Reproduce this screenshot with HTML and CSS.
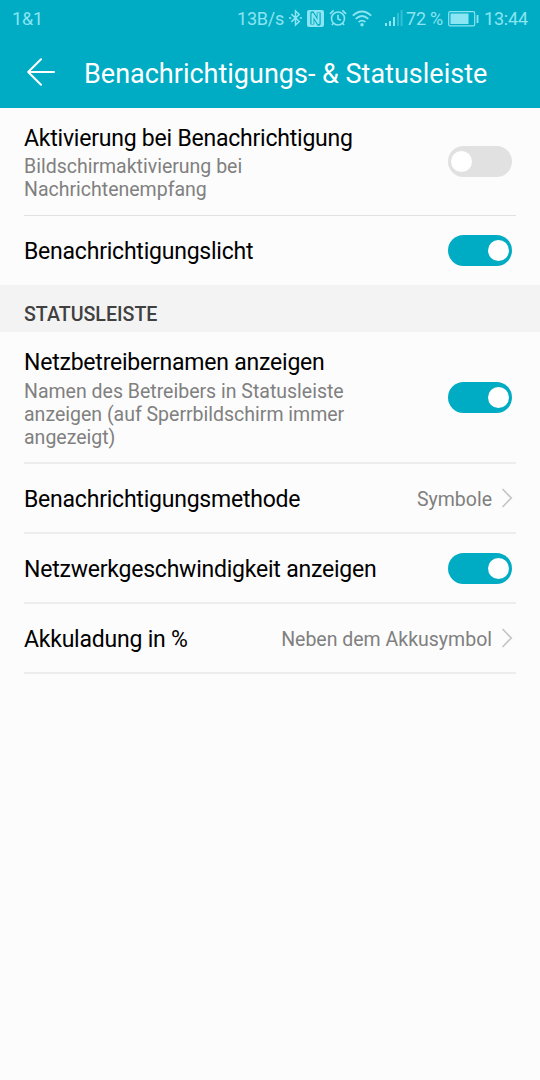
FILE: index.html
```html
<!DOCTYPE html>
<html lang="de">
<head>
<meta charset="utf-8">
<title>Benachrichtigungs- &amp; Statusleiste</title>
<link rel="stylesheet" href="styles.css">
</head>
<body>
<header class="header">
  <div class="status">
    <span class="carrier">1&amp;1</span>
    <div class="indicators">
      <span class="speed">13B/s</span>
      <svg class="ic-bt" width="13" height="18" viewBox="0 0 14 18" fill="none" stroke="currentColor" stroke-width="1.6"><path d="M2.500 4.800 11 12.800 7 16.500V1.500L11 5.200 2.500 13.200"/><path d="M0 9h2.400M11.600 9H14"/></svg>
      <svg class="ic-nfc" width="17" height="17" viewBox="0 0 17 17"><rect width="17" height="17" rx="2" fill="currentColor"/><path class="nfc-gap" d="M5.300 14.500V3.200L11.700 13.800V2.500"/><path class="nfc-line" d="M5.500 14V3.800L11.500 13.200V3"/></svg>
      <svg class="ic-alarm" width="18" height="18" viewBox="0 0 18 18" fill="none" stroke="currentColor" stroke-width="1.600"><circle cx="9" cy="9.500" r="6.500"/><path d="M9 5.800V10l2.800 1.300M.9 4.800 4.600 1.300M17.100 4.800 13.400 1.300M4.400 14.200 2.900 16M13.600 14.200l1.500 1.800"/></svg>
      <svg class="ic-wifi" width="20" height="17" viewBox="0 0 20 17" fill="none" stroke="currentColor" stroke-width="1.800"><path d="M.8 5.600Q10-2.600 19.200 5.600M3.700 8.900Q10 3.200 16.300 8.900M6.600 12Q10 9.200 13.400 12"/><circle cx="10" cy="14.800" r="1.700" fill="currentColor" stroke="none"/></svg>
      <svg class="ic-signal" width="18" height="17" viewBox="0 0 18 17" fill="currentColor"><path d="M0 13h2v3H0zM4 11h2v5H4zM8 7h2v9H8z"/><path opacity=".35" d="M12 3h2v13h-2zM15.600 0h2v16h-2z"/></svg>
      <span class="percent">72 %</span>
      <svg class="ic-battery" width="31" height="16" viewBox="0 0 31 16"><rect x=".7" y=".7" width="26" height="14.200" rx="1.500" fill="none" stroke="currentColor" stroke-width="1.200"/><path fill="currentColor" d="M2.500 2.500h18v10.500h-18zM28.600 4h1.800v8h-1.800z"/></svg>
      <span class="clock">13:44</span>
    </div>
  </div>
  <div class="titlebar">
    <svg width="28" height="28" viewBox="0 0 28 28" fill="none" stroke="currentColor" stroke-width="2" stroke-linecap="round" stroke-linejoin="round"><path d="M27 14H1.200M14 1.200 1.200 14 14 26.800"/></svg>
    <h1 class="title">Benachrichtigungs- &amp; Statusleiste</h1>
  </div>
</header>
<main>
  <section class="group">
    <div class="row row-double thin">
      <div><div class="label">Aktivierung bei Benachrichtigung</div><div class="summary">Bildschirmaktivierung bei<br>Nachrichtenempfang</div></div>
      <span class="switch off"></span>
    </div>
    <div class="row row-light">
      <div class="label">Benachrichtigungslicht</div>
      <span class="switch"></span>
    </div>
  </section>
  <h2 class="section-title">STATUSLEISTE</h2>
  <section class="group">
    <div class="row row-triple">
      <div><div class="label">Netzbetreibernamen anzeigen</div><div class="summary">Namen des Betreibers in Statusleiste<br>anzeigen (auf Sperrbildschirm immer<br>angezeigt)</div></div>
      <span class="switch"></span>
    </div>
    <div class="row">
      <div class="label">Benachrichtigungsmethode</div>
      <div class="value"><span>Symbole</span><svg width="12" height="20" viewBox="0 0 12 20"><path d="M1.500 1 10.300 10 1.500 19"/></svg></div>
    </div>
    <div class="row">
      <div class="label">Netzwerkgeschwindigkeit anzeigen</div>
      <span class="switch"></span>
    </div>
    <div class="row">
      <div class="label">Akkuladung in %</div>
      <div class="value"><span>Neben dem Akkusymbol</span><svg width="12" height="20" viewBox="0 0 12 20"><path d="M1.500 1 10.300 10 1.500 19"/></svg></div>
    </div>
  </section>
</main>
</body>
</html>
```
FILE: styles.css
```css
* { box-sizing: border-box; }
body { margin: 0; min-height: 1080px; background: #fcfcfc; color: #000; font-family: Roboto, sans-serif; }
.header { height: 108px; background: #00acc4; color: #fff; }
.status { display: flex; justify-content: space-between; height: 37px; padding: 1px 12px 0; color: #8be5f2; font-size: 18px; letter-spacing: -0.2px; line-height: 36px; white-space: nowrap; }
.indicators { display: flex; align-items: center; height: 36px; }
.indicators svg { flex: none; margin-bottom: 2px; }
.carrier { font-size: 18px; }
.speed { width: 47px; margin-left: -1px; }
.ic-bt { margin-left: 5px; }
.ic-nfc { margin-left: 5px; }
.nfc-gap { fill: none; stroke: #00acc4; stroke-width: 4; stroke-linejoin: round; }
.nfc-line { fill: none; stroke: currentColor; stroke-width: 2; stroke-linejoin: round; }
.ic-alarm { margin-left: 5px; }
.ic-wifi { margin-left: 5px; }
.ic-signal { margin-left: 13px; }
.percent { width: 38px; margin-left: 3px; }
.indicators .ic-battery { margin-left: 4px; margin-bottom: 1px; }
.clock { width: 44px; margin-left: 5px; }
.titlebar { display: flex; align-items: center; gap: 29px; height: 70px; padding-left: 27px; }
.title { margin: 3px 0 0; font-size: 27px; font-weight: 400; line-height: 32px; white-space: nowrap; }
.group { padding: 0 24px; }
.row { display: flex; align-items: center; justify-content: space-between; height: 70px; border-bottom: 2px solid #ededed; }
.row-double { height: 108px; }
.thin { border-bottom: 1px solid #e2e2e2; }
.row-light { height: 69px; border-bottom: 0; }
.row-triple { height: 132px; }
.label { padding-top: 3px; font-size: 23px; letter-spacing: -0.22px; line-height: 28px; white-space: nowrap; }
.row-triple .summary { margin-top: 3px; }
.summary { margin-top: 2px; color: #808080; font-size: 19.5px; line-height: 23px; white-space: nowrap; }
.switch { flex: none; display: flex; justify-content: flex-end; width: 64px; height: 31px; margin-right: 4px; padding: 5px 3px; border-radius: 16px; background: #00acc4; }
.switch::before { content: ""; width: 21px; height: 21px; border-radius: 50%; background: #fff; }
.off { justify-content: flex-start; background: #e1e1e1; }
.section-title { height: 47px; margin: 0; padding: 13px 24px 0; background: #f3f3f3; color: #404040; font-size: 19.6px; font-weight: 500; line-height: 34px; }
.value { display: flex; align-items: center; gap: 9px; margin-right: 3px; color: #808080; font-size: 19.5px; line-height: 28px; white-space: nowrap; }
.value span { padding-top: 3px; }
.value path { fill: none; stroke: #c6c6c6; stroke-width: 1.7; }
```
